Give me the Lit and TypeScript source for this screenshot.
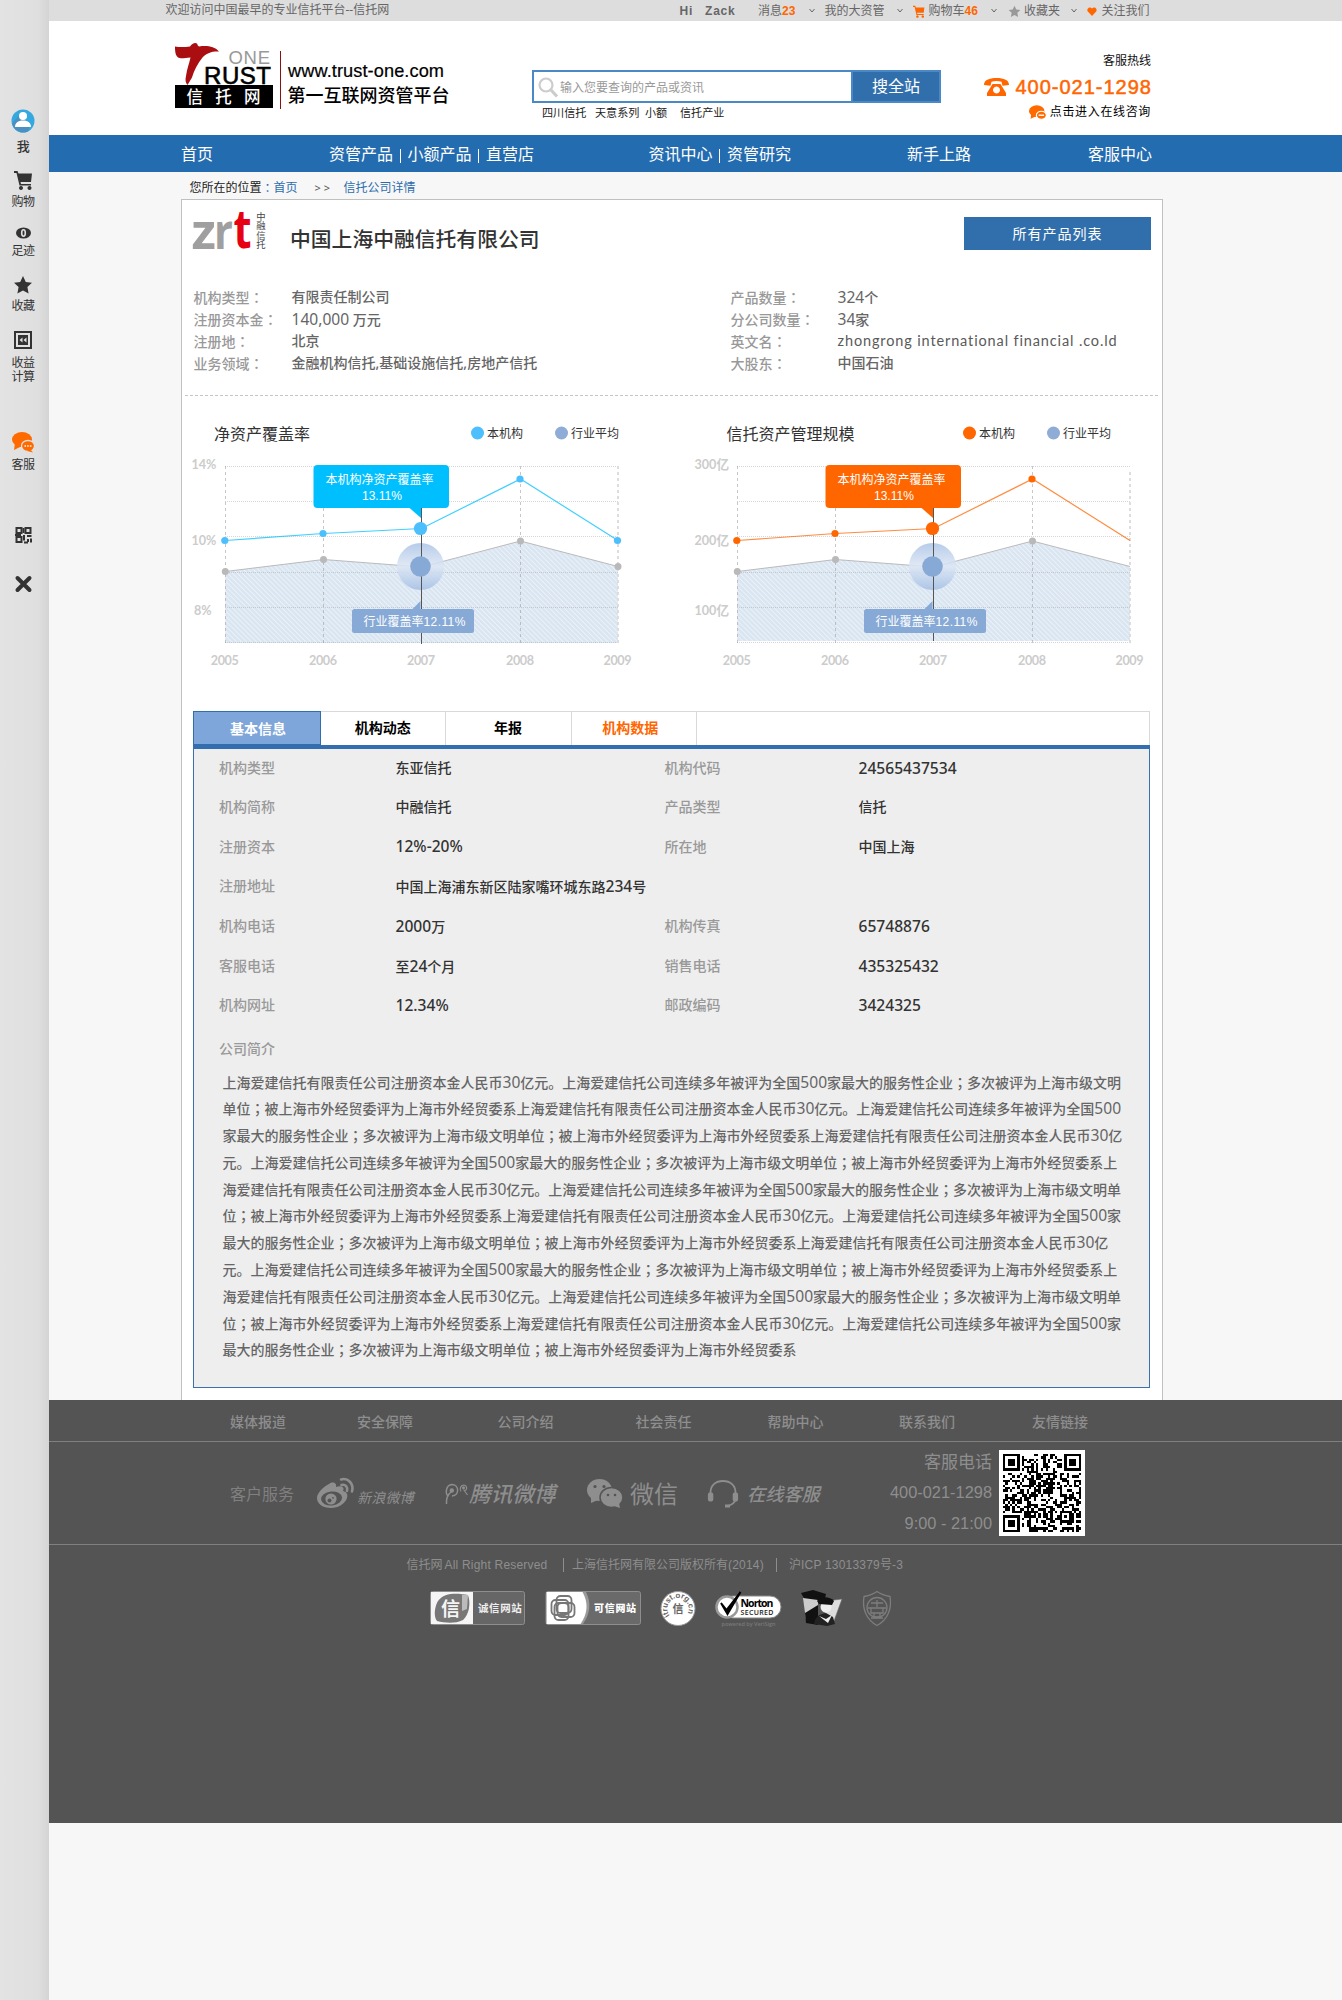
import { LitElement, html, svg, css } from "lit";
import { customElement, property } from "lit/decorators.js";

/** Wraps number runs and full-width punctuation so each can take its own face. */
const mix = (s: string) =>
  s.split(/([0-9][0-9.,%\-]*|[：；])/).map((p) =>
    /^[0-9]/.test(p) ? html`<span class="n">${p}</span>` : /^[：；]$/.test(p) ? html`<span class="p">${p}</span>` : p
  );

const shared = css`
  :host { display: block; box-sizing: border-box; }
  * { box-sizing: border-box; }
  svg { display: block; flex: none; overflow: visible; }
  .n { font-family: "Noto Sans", sans-serif; font-size: 15.6px; font-weight: 400; }
  .p { font-family: "Noto Sans CJK TC", sans-serif; }
`;

const star = "M10 1l2.8 5.9 6.2.8-4.6 4.4 1.2 6.4L10 15.400l-5.600 3.100 1.200-6.400L1 7.700l6.200-.8z";
const cart = "M0 1h3.500l1 2.500H18l-1 8.500H6.500l.5 2h10v1.500H5.500L2.500 3H0zM7 16a2 2 0 1 1-.01 0zM15.500 16a2 2 0 1 1-.01 0z";

@customElement("side-bar")
class SideBar extends LitElement {
  static styles = [shared, css`
    :host {
      width: 49px; min-height: 2000px; padding-top: 109px; flex: none;
      background: linear-gradient(90deg, #e3e3e3 0, #dfdfdf 38px, #d9d9d9 44px, #d4d4d4 49px);
      color: #333; font: 12px/14px "Noto Sans", "Noto Sans CJK SC", sans-serif;
    }
    .item { width: 46px; display: flex; flex-direction: column; align-items: center; text-align: center; letter-spacing: -.4px; }
    .me { gap: 6px; font-weight: 500; font-size: 13px; }
    .buy { margin-top: 17px; gap: 5px; }
    .foot { margin-top: 18px; gap: 5px; }
    .fav { margin-top: 17px; gap: 4px; }
    .calc { margin-top: 17px; gap: 6px; }
    .chat { margin-top: 47px; gap: 5px; }
    .code { margin-top: 54px; }
    .close { margin-top: 31px; }
  `];
  render() {
    return html`
      <div class="item me">
        <svg width="24" height="24" viewBox="0 0 24 24"><circle cx="12" cy="12" r="11.500" fill="#35a8e0"/><path d="M1 14.500L9.500 5l9 14-1.500 3.500A11.500 11.500 0 0 1 1 14.500z" fill="#4a90c0"/><circle cx="12" cy="7" r="4" fill="#fff"/><path d="M4 18c0-4 3-6.500 8-6.500s8 2.500 8 6.500z" fill="#fff"/></svg>
        <span>我</span>
      </div>
      <div class="item buy"><svg width="19" height="20" viewBox="0 0 19 20"><path d=${cart} fill="#333"/></svg><span>购物</span></div>
      <div class="item foot"><svg width="15" height="12" viewBox="0 0 15 12"><ellipse cx="7.500" cy="6" rx="7.500" ry="5.500" fill="#333"/><ellipse cx="7.500" cy="6" rx="2.600" ry="4" fill="#e0e0e0"/><ellipse cx="7.500" cy="6" rx="1" ry="2.400" fill="#333"/></svg><span>足迹</span></div>
      <div class="item fav"><svg width="20" height="20" viewBox="0 0 20 20"><path d=${star} fill="#333"/></svg><span>收藏</span></div>
      <div class="item calc"><svg width="18" height="20" viewBox="0 0 18 20"><rect x="1" y="2" width="16" height="16" fill="none" stroke="#333" stroke-width="2"/><rect x="4" y="5" width="10" height="10" fill="#333"/><path d="M8.500 7.500v5L5.500 10zM12.500 7.500v5L9.500 10z" fill="#e0e0e0"/></svg><span>收益<br>计算</span></div>
      <div class="item chat"><svg width="22" height="22" viewBox="0 0 22 22"><ellipse cx="10" cy="8.500" rx="10" ry="7.500" fill="#ff6a00"/><path d="M3 12l-1 7 8-4z" fill="#ff6a00"/><ellipse cx="16" cy="15" rx="6.500" ry="5.500" fill="#ff6a00" stroke="#e0e0e0" stroke-width="1.300"/><path d="M18 18l3 3.500-6-1.500z" fill="#ff6a00"/><path d="M12.500 15h7" stroke="#fff" stroke-width="1.500" stroke-dasharray="1.500 1.200"/></svg><span>客服</span></div>
      <div class="item code"><svg width="17" height="18" viewBox="0 0 17 18" fill="none" stroke="#333" stroke-width="2"><rect x="1.500" y="2" width="5" height="5"/><rect x="10.500" y="2" width="5" height="5"/><rect x="1.500" y="11" width="5" height="5"/><path d="M9 9v5.500M0 9h6M9 16.500h4M12 10h4.500M13 13v3M16 12.500v4M8.500 2v5"/></svg></div>
      <div class="item close"><svg width="17" height="18" viewBox="0 0 17 18"><path d="M2.500 3l12 12M14.500 3l-12 12" stroke="#333" stroke-width="4" stroke-linecap="round"/></svg></div>`;
  }
}

@customElement("page-header")
class PageHeader extends LitElement {
  static styles = [shared, css`
    :host { font: 12px/16px "Noto Sans", "Noto Sans CJK SC", sans-serif; }
    .top { height: 21px; background: #ddd; color: #666; padding-left: 116.500px; white-space: nowrap; display: grid;
      grid-template-columns: 514px 25.500px 53px 51px 15.500px 72.500px 15.500px 16px 62px 17px 16.500px 47px 15.500px 15px 60px; align-items: center; line-height: 22px; }
    .top .wel { line-height: 20px; align-self: start; }
    .b { font-family: "Liberation Sans"; font-weight: 700; letter-spacing: .8px; }
    .o { font-family: "Liberation Sans"; color: #f60; font-weight: 700; }
    .head { height: 114px; background: #fff; display: flex; padding-left: 126px; }
    .logo { margin-top: 20px; }
    .search { margin: 49px 0 0 73px; width: 409px; }
    .box { display: flex; height: 33px; border: 2px solid #4a88c6; background: #fff; }
    .input { flex: 1; display: flex; align-items: center; color: #999; padding: 2px 0 0 4px; gap: 1px; }
    .go { width: 88px; border-left: 2px solid #4a88c6; background: #316fac; color: #fff; font-size: 16px; line-height: 29px; text-align: center; }
    .hot { display: grid; grid-template-columns: 53px 50px 35px auto; padding-left: 10px; color: #222; font-size: 11.100px; line-height: 17px; margin-top: 1px; white-space: nowrap; }
    .tel { width: 190px; margin-left: 20px; padding-top: 32px; display: flex; flex-direction: column; align-items: flex-end; color: #111; white-space: nowrap; }
    .num { display: flex; align-items: center; gap: 6px; color: #f60; font: 20px/22px "Liberation Sans"; letter-spacing: 1px; -webkit-text-stroke: .5px #f60; margin: 7px -1px 0 0; }
    .online { display: flex; align-items: center; gap: 4px; letter-spacing: .65px; line-height: 18px; margin-top: 5px; color: #000; }
    nav { height: 37px; background: #236cb0; color: #fff; font-size: 16px; line-height: 37px; padding-left: 132px; display: grid; grid-template-columns: 148px 319.500px 258.500px 181px auto; white-space: nowrap; }
    nav span { display: flex; align-items: center; }
    nav i { width: 1px; height: 14px; background: #fff; margin: 3px 7px 0 6.500px; }
    .low { padding-top: 1px; }
    .crumb { height: 27px; padding: 8px 0 0 140.500px; display: flex; color: #222; }
    .crumb a { color: #2d6dae; }
    .colon { color: #2d6dae; width: 12px; }
    .sep { margin: 0 12px 0 17px; width: 17px; letter-spacing: 3px; font-size: 11px; color: #555; }
  `];
  render() {
    const v = svg`<path d="M.5 1l2.500 3L5.500 1" fill="none" stroke="#666"/>`;
    const chev = html`<svg width="6" height="6" viewBox="0 0 6 6">${v}</svg>`;
    return html`
      <div class="top">
        <span class="wel">欢迎访问中国最早的专业信托平台--信托网</span>
        <span class="b">Hi</span><span class="b">Zack</span>
        <span>消息<span class="o">23</span></span>${chev}
        <span>我的大资管</span>${chev}
        <svg width="12" height="13" viewBox="0 0 19 20"><path d=${cart} fill="#f60"/></svg>
        <span>购物车<span class="o">46</span></span>${chev}
        <svg width="13" height="13" viewBox="0 0 20 20"><path d=${star} fill="#999"/></svg>
        <span>收藏夹</span>${chev}
        <svg width="10" height="9" viewBox="0 0 10 9"><path d="M5 9L.6 4.300C-.6 1.500 2.800-.9 5 1.500 7.200-.9 10.600 1.500 9.400 4.300z" fill="#f60"/></svg>
        <span>关注我们</span>
      </div>
      <div class="head">
        <svg class="logo" width="284" height="70" viewBox="175 41 284 70">
          <path d="M175 46.500c5 1 10 .5 15 0 2-3 5-4.500 7-3 .6 1.500 1 2.500 2 3 8-1 15-.5 20 5-6-.5-12 1-16.500 6-5 6-8.500 13-10.500 20l-4.500 7.500c-2-2-2.500-5-1.500-9 1-7 3-12 4.500-18.500-5 0-8 1.500-11 .5-4-1-4.500-6-4.500-11.500z" fill="#ab0e10"/>
          <text x="228.500" y="63.500" font-family="Liberation Sans" font-size="18.500" fill="#999" textLength="41.500">ONE</text>
          <text x="204" y="83.500" font-family="Liberation Sans" font-size="24" textLength="67" stroke="#000" stroke-width=".6">RUST</text>
          <rect x="175" y="85" width="98" height="23" fill="#000"/>
          <text x="186.500" y="102.500" font-family="Noto Sans CJK SC, sans-serif" font-weight="500" font-size="16.500" fill="#fff" letter-spacing="12.200">信托网</text>
          <path d="M280.500 51v58" stroke="#8b1010"/>
          <text x="288" y="77" font-family="Liberation Sans" font-size="18.200" textLength="156" stroke="#000" stroke-width=".2">www.trust-one.com</text>
          <text x="287.500" y="102" font-family="Noto Sans CJK SC, sans-serif" font-weight="500" font-size="18" textLength="162">第一互联网资管平台</text>
        </svg>
        <div class="search">
          <div class="box">
            <div class="input"><svg width="21" height="21" viewBox="0 0 21 21" fill="none" stroke="#ccc"><circle cx="8" cy="8" r="6.500" stroke-width="2.200"/><path d="M13 13l6 6.500" stroke-width="3.200"/></svg><span>输入您要查询的产品或资讯</span></div>
            <div class="go">搜全站</div>
          </div>
          <div class="hot"><span>四川信托</span><span>天意系列</span><span>小额</span><span>信托产业</span></div>
        </div>
        <div class="tel">
          <span>客服热线</span>
          <div class="num"><svg width="25" height="18" viewBox="0 0 25 18" fill="#f60"><path d="M0 7C0 2 5 0 12.500 0S25 2 25 7l-6.500.8-1-4c-3-1-7-1-10 0l-1 4z"/><path fill-rule="evenodd" d="M8.500 6h8l5.500 9v3H3v-3zM12.500 8.500a3.500 3.500 0 1 0 .01 0z"/></svg><span>400-021-1298</span></div>
          <div class="online"><svg width="17" height="15" viewBox="0 0 22 22" preserveAspectRatio="none"><ellipse cx="10" cy="9" rx="10" ry="8.500" fill="#ff6a00"/><path d="M3 12l-1 8 8-4z" fill="#ff6a00"/><ellipse cx="16" cy="15" rx="6.500" ry="6" fill="#ff6a00" stroke="#fff" stroke-width="1.500"/><path d="M12.500 15h7" stroke="#fff" stroke-width="2"/></svg><span>点击进入在线咨询</span></div>
        </div>
      </div>
      <nav>
        <span>首页</span>
        <span class="low">资管产品<i></i>小额产品<i></i>直营店</span>
        <span>资讯中心<i></i>资管研究</span><span>新手上路</span><span>客服中心</span>
      </nav>
      <div class="crumb"><span>您所在的位置</span><span class="p colon">：</span><a>首页</a><span class="sep">&gt;&gt;</span><a>信托公司详情</a></div>`;
  }
}

@customElement("trend-chart")
class TrendChart extends LitElement {
  @property() heading = "";
  @property() color = "#4cbffc";
  @property() tip = "#00bfff";
  @property({ type: Number }) left = 182;
  @property({ type: Number }) legend = 477.5;
  @property({ type: Array }) ticks: string[] = [];
  @property({ type: Boolean }) open = false;
  static styles = [shared, css`
    text { font-family: "Noto Sans CJK SC", sans-serif; font-size: 12px; }
    .t { font-size: 16px; fill: #333; }
    .k { fill: #333; }
    .a { font-family: Lato, "Noto Sans CJK SC", sans-serif; font-weight: 700; font-size: 12.600px; fill: #ccc; }
    .w { fill: #fff; }
    .pc { font-family: "Liberation Sans"; }
    .sp { letter-spacing: .4px; }
  `];
  render() {
    const xs = [225.3, 323.5, 421.5, 520.5, 618];
    const ours = [540.5, 533.5, 528.5, 479, 540.5];
    const avg = [571.5, 559.5, 567, 541, 566.5];
    const line = (ys: number[]) => xs.map((x, i) => `${x},${ys[i]}`).join(" ");
    const last = this.open ? 4 : 5;
    const bottom = this.open ? 641 : 643;
    return html`<svg width="490" height="315" viewBox="${this.left} 396 490 315">
      <defs>
        <pattern id="h" width="3.500" height="3.500" patternUnits="userSpaceOnUse" patternTransform="rotate(-45)"><path d="M.5 0v3.500" stroke="#fff" stroke-opacity=".6" stroke-width=".8"/></pattern>
        <linearGradient id="g" x1="0" y1="0" x2="0" y2="1"><stop offset="0" stop-color="#a9c3e6"/><stop offset=".5" stop-color="#dde6f4"/><stop offset="1" stop-color="#a3bfe4"/></linearGradient>
      </defs>
      <text class="t" x=${this.open ? 726.5 - 512 : 214} y="440">${this.heading}</text>
      <circle cx=${this.legend} cy="433" r="6.500" fill=${this.color}/><text class="k" x=${this.legend + 9.5} y="437.500">本机构</text>
      <circle cx=${this.legend + 84} cy="433" r="6.500" fill="#8eacd6"/><text class="k" x=${this.legend + 93.5} y="437.500">行业平均</text>
      <polygon points="${xs[0]},${bottom} ${line(avg)} ${xs[4]},${bottom}" fill="#d9e5f1"/>
      <polygon points="${xs[0]},${bottom} ${line(avg)} ${xs[4]},${bottom}" fill="url(#h)"/>
      ${[466.5, 501.5, 536.5, 572.5, 607.5, 642.5].map((y) => svg`<path d="M225 ${y}H618" stroke="#999" stroke-opacity=".4" stroke-dasharray="1 1"/>`)}
      ${[225.5, 323.5, 520.5, 618].map((x, i) => svg`<path d="M${x} ${i === 3 && this.open ? 472 : 466}V644" stroke=${i === 3 ? "#ddd" : "#999"} stroke-opacity=${i === 3 ? 1 : 0.55} stroke-width=${i === 3 ? 2 : 1} stroke-dasharray="3 3"/>`)}
      <polyline points=${line(avg)} fill="none" stroke="#bbb"/>
      <polyline points=${line(ours)} fill="none" stroke=${this.tip} stroke-opacity=".75" stroke-width="1.200"/>
      <circle cx="420.500" cy="566.500" r="23.500" fill="url(#g)" opacity=".85"/>
      <path d="M421.500 508V${this.open ? 641 : 644}" stroke="#555"/>
      <circle cx="420.500" cy="566.500" r="10.300" fill="#87a9d6"/>
      ${xs.slice(0, last).map((x, i) => i === 2 ? "" : svg`<circle cx=${x} cy=${avg[i]} r="3.500" fill="#b9b9b9"/><circle cx=${x - 0.5} cy=${ours[i]} r="3.600" fill=${this.color}/>`)}
      <circle cx="420.500" cy="528.500" r="6.600" fill=${this.color}/>
      <rect x="313.500" y="465" width="135.500" height="43" rx="4" fill=${this.tip}/><path d="M409 507.500h12v10.500z" fill=${this.tip}/>
      <text class="w" x="325.500" y="483.500">本机构净资产覆盖率</text><text class="w pc" x="362" y="500">13.11%</text>
      <rect x="352" y="609" width="122" height="24" rx="2.500" fill="#87a9d6"/><path d="M412 609.500l8.500-8.500v8.500z" fill="#87a9d6"/>
      <text class="w" x="363.500" y="625.500">行业覆盖率<tspan class="pc sp">12.11%</tspan></text>
      ${this.ticks.map((t, i) => svg`<text class="a" x=${this.open ? 182.5 : i === 2 ? 194 : 191.5} y=${[469, 545, 615][i]}>${t}</text>`)}
      ${xs.map((x, i) => svg`<text class="a" text-anchor="middle" x=${x - 0.5} y="665" textLength="28">${2005 + i}</text>`)}
    </svg>`;
  }
}

const FACTS: string[][] = [
  ["机构类型", "东亚信托", "机构代码", "24565437534"],
  ["机构简称", "中融信托", "产品类型", "信托"],
  ["注册资本", "12%-20%", "所在地", "中国上海"],
  ["注册地址", "中国上海浦东新区陆家嘴环城东路234号", "", ""],
  ["机构电话", "2000万", "机构传真", "65748876"],
  ["客服电话", "至24个月", "销售电话", "435325432"],
  ["机构网址", "12.34%", "邮政编码", "3424325"],
];
const INTRO = [
  "上海爱建信托有限责任公司注册资本金人民币30亿元。上海爱建信托公司连续多年被评为全国500家最大的服务性企业；多次被评为上海市级文明",
  "单位；被上海市外经贸委评为上海市外经贸委系上海爱建信托有限责任公司注册资本金人民币30亿元。上海爱建信托公司连续多年被评为全国500",
  "家最大的服务性企业；多次被评为上海市级文明单位；被上海市外经贸委评为上海市外经贸委系上海爱建信托有限责任公司注册资本金人民币30亿",
  "元。上海爱建信托公司连续多年被评为全国500家最大的服务性企业；多次被评为上海市级文明单位；被上海市外经贸委评为上海市外经贸委系上",
  "海爱建信托有限责任公司注册资本金人民币30亿元。上海爱建信托公司连续多年被评为全国500家最大的服务性企业；多次被评为上海市级文明单",
  "位；被上海市外经贸委评为上海市外经贸委系上海爱建信托有限责任公司注册资本金人民币30亿元。上海爱建信托公司连续多年被评为全国500家",
  "最大的服务性企业；多次被评为上海市级文明单位；被上海市外经贸委评为上海市外经贸委系上海爱建信托有限责任公司注册资本金人民币30亿",
  "元。上海爱建信托公司连续多年被评为全国500家最大的服务性企业；多次被评为上海市级文明单位；被上海市外经贸委评为上海市外经贸委系上",
  "海爱建信托有限责任公司注册资本金人民币30亿元。上海爱建信托公司连续多年被评为全国500家最大的服务性企业；多次被评为上海市级文明单",
  "位；被上海市外经贸委评为上海市外经贸委系上海爱建信托有限责任公司注册资本金人民币30亿元。上海爱建信托公司连续多年被评为全国500家",
  "最大的服务性企业；多次被评为上海市级文明单位；被上海市外经贸委评为上海市外经贸委系",
];

@customElement("company-card")
class CompanyCard extends LitElement {
  static styles = [shared, css`
    :host { margin-left: 132px; width: 982px; height: 1201px; background: #fff; border: 1px solid #c0c0c0; border-bottom: 0;
      font: 14px/22px "Noto Sans", "Noto Sans CJK SC", sans-serif; white-space: nowrap; }
    .head { height: 86px; display: flex; align-items: flex-start; }
    .logo { margin: 11px 0 0 11px; }
    .title { margin: 26px 0 0 22px; font-size: 20.800px; line-height: 26px; color: #333; font-weight: 500; }
    .btn { margin: 17px 11px 0 auto; width: 187px; height: 33px; background: #316fac; color: #fff; text-align: center; line-height: 33px; letter-spacing: 1px; }
    .info { display: grid; grid-template-columns: 98px 439px 107px auto; grid-auto-rows: 22px; padding-left: 11.500px; margin-top: -.5px; color: #999; font-weight: 500; }
    .info b { color: #666; font-weight: 500; }
    .info .en { font-family: Lato; font-weight: 400; font-size: 14.500px; letter-spacing: .87px; color: #5a5a5a; line-height: 21px; }
    .dash { height: 1px; margin: 21.500px 3px 0; background: repeating-linear-gradient(90deg, #c4c4c4 0 3px, transparent 3px 5px); }
    .charts { display: flex; }
    .tabs { margin-left: 11px; width: 957px; height: 34px; display: flex; border: 1px solid #d9d9d9; border-bottom: 0; border-left: 0; font-weight: 700; color: #000; line-height: 32px; text-align: center; }
    .tab { width: 125.300px; border-right: 1px solid #d9d9d9; font-size: 14px; padding-right: 1px; }
    .on { width: 128px; margin-top: -1px; padding: 1px 0 0 2px; border: 1px solid #316fac; background: #7ea6da; color: #fff; }
    .hot { color: #f60; padding-right: 7px; }
    .panel { margin-left: 11px; width: 957px; height: 643px; border: 1px solid #3a70ad; border-top: 4px solid #336fb0; background: #eee; }
    .facts { display: grid; grid-template-columns: 176.500px 269px 194px auto; grid-template-rows: 38px 40px 39px 40px 40px 40px 38px; padding-left: 25px; align-items: center; color: #999; font-weight: 500; }
    .facts b { color: #333; font-weight: 500; }
    .facts .n { font-weight: 500; }
    .sub { margin: 14px 0 0 25px; color: #999; font-weight: 500; }
    .intro { margin: 8.500px 0 0 28.500px; line-height: 26.800px; color: #666; font-weight: 500; }
    .intro div { height: 26.800px; }
  `];
  render() {
    return html`
      <div class="head">
        <svg class="logo" width="75" height="40" viewBox="193 211 75 40">
          <g font-family="Open Sans, sans-serif" font-weight="700" font-size="50"><text x="191.500" y="248.500" fill="#9f9f9f">z</text><text x="214" y="248.500" fill="#9f9f9f" textLength="19" lengthAdjust="spacingAndGlyphs">r</text><text x="233.500" y="248" fill="#e60012" font-size="54" textLength="18" lengthAdjust="spacingAndGlyphs">t</text></g>
          <text x="261" y="211.500" font-family="Noto Sans CJK SC, sans-serif" font-size="9.400" fill="#444" writing-mode="vertical-rl">中融信托</text>
        </svg>
        <div class="title">中国上海中融信托有限公司</div>
        <div class="btn">所有产品列表</div>
      </div>
      <div class="info">
        <span>${mix("机构类型：")}</span><b>有限责任制公司</b><span>${mix("产品数量：")}</span><b>${mix("324个")}</b>
        <span>${mix("注册资本金：")}</span><b>${mix("140,000 万元")}</b><span>${mix("分公司数量：")}</span><b>${mix("34家")}</b>
        <span>${mix("注册地：")}</span><b>北京</b><span>${mix("英文名：")}</span><b class="en">zhongrong international financial .co.ld</b>
        <span>${mix("业务领域：")}</span><b>金融机构信托,基础设施信托,房地产信托</b><span>${mix("大股东：")}</span><b>中国石油</b>
      </div>
      <div class="dash"></div>
      <div class="charts">
        <trend-chart heading="净资产覆盖率" .ticks=${["14%", "10%", "8%"]}></trend-chart>
        <trend-chart open heading="信托资产管理规模" color="#ff6600" tip="#ff6600" left="160" legend="457.5" .ticks=${["300亿", "200亿", "100亿"]}></trend-chart>
      </div>
      <div class="tabs"><div class="tab on">基本信息</div><div class="tab">机构动态</div><div class="tab">年报</div><div class="tab hot">机构数据</div></div>
      <div class="panel">
        <div class="facts">${FACTS.map((r) => r.map((c, i) => (i % 2 ? html`<b>${mix(c)}</b>` : html`<span>${c}</span>`)))}</div>
        <div class="sub">公司简介</div>
        <div class="intro">${INTRO.map((l) => html`<div>${mix(l)}</div>`)}</div>
      </div>`;
  }
}

/** 33×33 matrix: three finder squares, one alignment square, scattered data modules. */
const qrPath = () => {
  let seed = 77;
  let d = "";
  const ring = (x: number, y: number, ox: number, oy: number, s: number) => {
    const c = (s - 1) / 2;
    const m = Math.max(Math.abs(x - ox - c), Math.abs(y - oy - c));
    return m > c ? -1 : m === c || m <= c - 2 ? 1 : 0;
  };
  for (let y = 0; y < 33; y++)
    for (let x = 0; x < 33; x++) {
      seed = (seed * 1103515245 + 12345) % 2147483648;
      let on = (seed >> 12) % 100 < 50 ? 1 : 0;
      if ((x < 8 || x > 24) && y < 8) on = 0;
      if (x < 8 && y > 24) on = 0;
      for (const [a, b, s] of [[0, 0, 7], [26, 0, 7], [0, 26, 7], [24, 24, 5]]) {
        const r = ring(x, y, a, b, s);
        if (r >= 0) on = r;
      }
      if (on) d += `M${x} ${y}h1v1h-1z`;
    }
  return d;
};

@customElement("page-footer")
class PageFooter extends LitElement {
  static styles = [shared, css`
    :host { height: 423px; background: #545454; color: #8e8e8e; font: 14px/20px "Noto Sans", "Noto Sans CJK SC", sans-serif; white-space: nowrap; }
    .links { height: 42px; padding: 12px 0 0 181px; border-bottom: 1px solid #808080; display: grid; grid-template-columns: 127px 140.500px 138px 132px 131.500px 133px auto; font-weight: 500; }
    .serve { height: 103px; border-bottom: 1px solid #808080; padding-left: 181px; display: flex; }
    .channels { display: grid; grid-template-columns: 87px 40px 88px 24px 118px 43px 78px 39px 75px; height: 103px; align-items: center; }
    .cs { font-size: 16px; color: #808080; }
    .it { font-style: italic; }
    .wb { padding-top: 9px; letter-spacing: .2px; font-size: 14px; }
    .tx { font-size: 21.600px; font-weight: 500; }
    .wx { font-size: 24px; }
    .on { font-size: 18.200px; font-weight: 500; }
    .hours { width: 170px; text-align: right; font: 16.400px/31px "Liberation Sans", "Noto Sans CJK SC", sans-serif; padding-top: 4px; margin-right: 7px; }
    .tel { font-size: 17px; font-family: "Noto Sans", "Noto Sans CJK SC"; }
    .qr { background: #fff; margin-top: 8px; }
    .copy { font: 12px/16px "Liberation Sans", "Noto Sans CJK SC", sans-serif; height: 46px; padding: 12px 0 0 357.500px; display: grid; grid-template-columns: 38px 118px 9.500px 204px 13px auto; }
    .copy i { width: 1px; height: 14px; margin-top: 1px; background: #8e8e8e; }
    .s { letter-spacing: .2px; }
  `];
  render() {
    const g = "#8e8e8e";
    return html`
      <div class="links">${["媒体报道", "安全保障", "公司介绍", "社会责任", "帮助中心", "联系我们", "友情链接"].map((t) => html`<span>${t}</span>`)}</div>
      <div class="serve">
        <div class="channels">
          <span class="cs">客户服务</span>
          <svg width="37" height="31" viewBox="0 0 37 31"><path d="M12 6c4-3 8-1 7 3 5-2 9 0 7 4 4 1 5 4 4 7-2 6-9 10-16 10C6 30 0 26 0 20 0 15 6 9 12 6z" fill=${g}/><ellipse cx="14.500" cy="20.500" rx="10.500" ry="7" fill="#545454" transform="rotate(-6 14 20)"/><circle cx="14" cy="21" r="5.600" fill=${g}/><circle cx="12.500" cy="22.500" r="2" fill="#545454"/><circle cx="16" cy="19.800" r=".9" fill="#545454"/><path d="M24 1.500c7-2 13 4 11 12M24.500 7c4-1 6.500 2 5.500 6" fill="none" stroke=${g} stroke-width="2.600" stroke-linecap="round"/></svg>
          <span class="it wb">新浪微博</span>
          <svg width="24" height="22" viewBox="0 0 24 22" fill="none" stroke=${g} stroke-width="1.500"><path d="M1.500 21c-.5-5 .5-9 5-12.500M3.500 13.500C0 11 .5 2 7 1.500c7 0 8 11 0 11.500"/><circle cx="6.800" cy="7.500" r="1.500" fill=${g}/><path d="M22.500 12l-4-5.500M16 8.500c-2-3 0-6.500 3-6.500 3.500.5 3.500 6 0 5.500" stroke-width="1.200"/><circle cx="18.500" cy="4.800" r=".8" fill=${g}/></svg>
          <span class="it tx">腾讯微博</span>
          <svg width="36" height="31" viewBox="0 0 36 31"><ellipse cx="12.500" cy="12" rx="12.500" ry="11" fill=${g}/><path d="M4 19v6l7-3z" fill=${g}/><ellipse cx="24.500" cy="19.500" rx="11.500" ry="10" fill=${g} stroke="#545454" stroke-width="1.500"/><path d="M27 28l6 2-1-5z" fill=${g}/><g fill="#545454"><circle cx="8" cy="8.500" r="1.600"/><circle cx="17" cy="8.500" r="1.600"/><circle cx="21" cy="17" r="1.300"/><circle cx="28" cy="17" r="1.300"/></g></svg>
          <span class="wx">微信</span>
          <svg width="30" height="30" viewBox="0 0 30 30" fill="none" stroke=${g} stroke-width="1.800"><path d="M2.500 15C2 6 8 2 15 2s13 4 12.500 13M27.500 20c-.5 4-4 6-8 7"/><rect x=".8" y="14.500" width="3.600" height="7" rx="1" fill=${g}/><rect x="25.600" y="14.500" width="3.600" height="7" rx="1" fill=${g}/><rect x="17.500" y="26" width="4" height="2" fill=${g} stroke-width="1"/></svg>
          <span class="it on">在线客服</span>
        </div>
        <div class="hours"><div class="tel">客服电话</div><div>400-021-1298</div><div>9:00 - 21:00</div></div>
        <svg class="qr" width="86" height="86" viewBox="-1.700 -1.700 36.400 36.400" shape-rendering="crispEdges"><path d=${qrPath()} fill="#000"/></svg>
      </div>
      <div class="copy"><span>信托网</span><span class="s">All Right Reserved</span><i></i><span>上海信托网有限公司版权所有<span class="s">(2014)</span></span><i></i><span>沪<span class="s">ICP 13013379</span>号<span class="s">-3</span></span></div>
      ${this.badges()}`;
  }
  badges() {
    const f = "Noto Sans CJK SC, sans-serif";
    return html`<svg width="1293" height="38" viewBox="49 1591 1293 38">
      <rect x="430.500" y="1591.500" width="94" height="33" rx="2" fill="#666" stroke="#8e8e8e"/><rect x="431" y="1592" width="42" height="32" fill="#f5f5f5"/>
      <path d="M438 1601c6-9 20-8 30-6 3 8 1 20-5 25-8 4-18 3-26 1-4-5-2-15 1-20z" fill="#777"/><path d="M462 1595l6 0-1 14-5 2z" fill="#bbb"/>
      <text x="441" y="1616" font-family=${f} font-weight="700" font-size="19" fill="#f5f5f5">信</text>
      <text x="478" y="1612" font-family=${f} font-weight="700" font-size="10.500" letter-spacing=".6" fill="#eee">诚信网站</text>
      <rect x="546" y="1591.500" width="94.500" height="33" rx="2" fill="#6a6a6a" stroke="#8e8e8e"/><path d="M582 1592h4q8 16-3 32h-6z" fill="#999"/><path d="M546.500 1592h36q9 16-2 32h-34z" fill="#fff"/>
      <g fill="none" stroke="#777" stroke-width="1.800"><rect x="556.500" y="1596" width="15" height="17" rx="4"/><rect x="551.500" y="1600" width="17" height="15" rx="4"/><rect x="557.500" y="1603" width="17" height="14" rx="4"/><rect x="554.500" y="1603" width="14" height="17" rx="4"/></g>
      <text x="594" y="1612" font-family=${f} font-weight="900" font-size="10" letter-spacing=".7" fill="#fff">可信网站</text>
      <circle cx="678" cy="1608.500" r="17" fill="#fff" stroke="#999"/>
      <defs><path id="arc" d="M669.800 1615.500a10.700 10.700 0 1 1 16.400 0"/></defs>
      <text font-family="Liberation Sans" font-weight="700" font-size="7.800" fill="#666"><textPath href="#arc">itrust.org.cn</textPath></text>
      <text x="672.500" y="1612.500" font-family=${f} font-weight="700" font-size="11" fill="#666">信</text>
      <rect x="722" y="1596" width="59" height="22" rx="11" fill="#fff" stroke="#888"/><circle cx="727" cy="1607" r="10.500" fill="#fff" stroke="#999" stroke-width="2.500"/>
      <path d="M721 1603l5.500 7 14-18-13 22z" fill="#000" stroke="#000" stroke-width="2"/>
      <text x="740.500" y="1606.500" font-family="Open Sans" font-weight="700" font-size="10.500" textLength="33" fill="#000">Norton</text>
      <text x="740.500" y="1615" font-family="Open Sans" font-weight="600" font-size="7" textLength="33" fill="#222">SECURED</text>
      <text x="721.500" y="1626" font-family="Open Sans" font-weight="600" font-size="5.500" textLength="54" fill="#7a7a7a">powered by VeriSign</text>
      <path d="M801 1593l12-3 13 4-2 9-19-3z" fill="#111"/><path d="M803 1598l15 2v15l-12 5z" fill="#ccc"/><path d="M805 1613l13-8v20l-12-2z" fill="#111"/><path d="M826 1601l16-2-8 22-10 4z" fill="#ddd" stroke="#666" stroke-width=".6"/><circle cx="826" cy="1607" r="5.500" fill="#eee"/><path d="M817 1601c3-5 13-5 17 0l-2 4-13-1z" fill="#111"/><path d="M814 1624c1-7 5-10 12-11l7 4 2 7-8 2z" fill="#222"/><path d="M819 1616l7 3 6-4-4 8z" fill="#eee"/>
      <g fill="none" stroke="#7d7d7d" stroke-width="1.300"><path d="M877 1591.500c4 3 8 4 13 5 2 12-2 23-13 29-11-6-15-17-13-29 5-1 9-2 13-5z"/><circle cx="877" cy="1607.500" r="10"/><path d="M877 1600v7M871 1603h12M868 1608h18M871 1608v5h12v-5M874 1613v4h6v-4M871 1618h12"/></g>
    </svg>`;
  }
}

@customElement("app-root")
class AppRoot extends LitElement {
  static styles = css`
    :host { display: flex; width: 1342px; height: 2000px; background: #f7f7f7; overflow: hidden; }
    main { flex: 1; display: flex; flex-direction: column; min-width: 0; }
  `;
  render() {
    return html`<side-bar></side-bar><main><page-header></page-header><company-card></company-card><page-footer></page-footer></main>`;
  }
}
